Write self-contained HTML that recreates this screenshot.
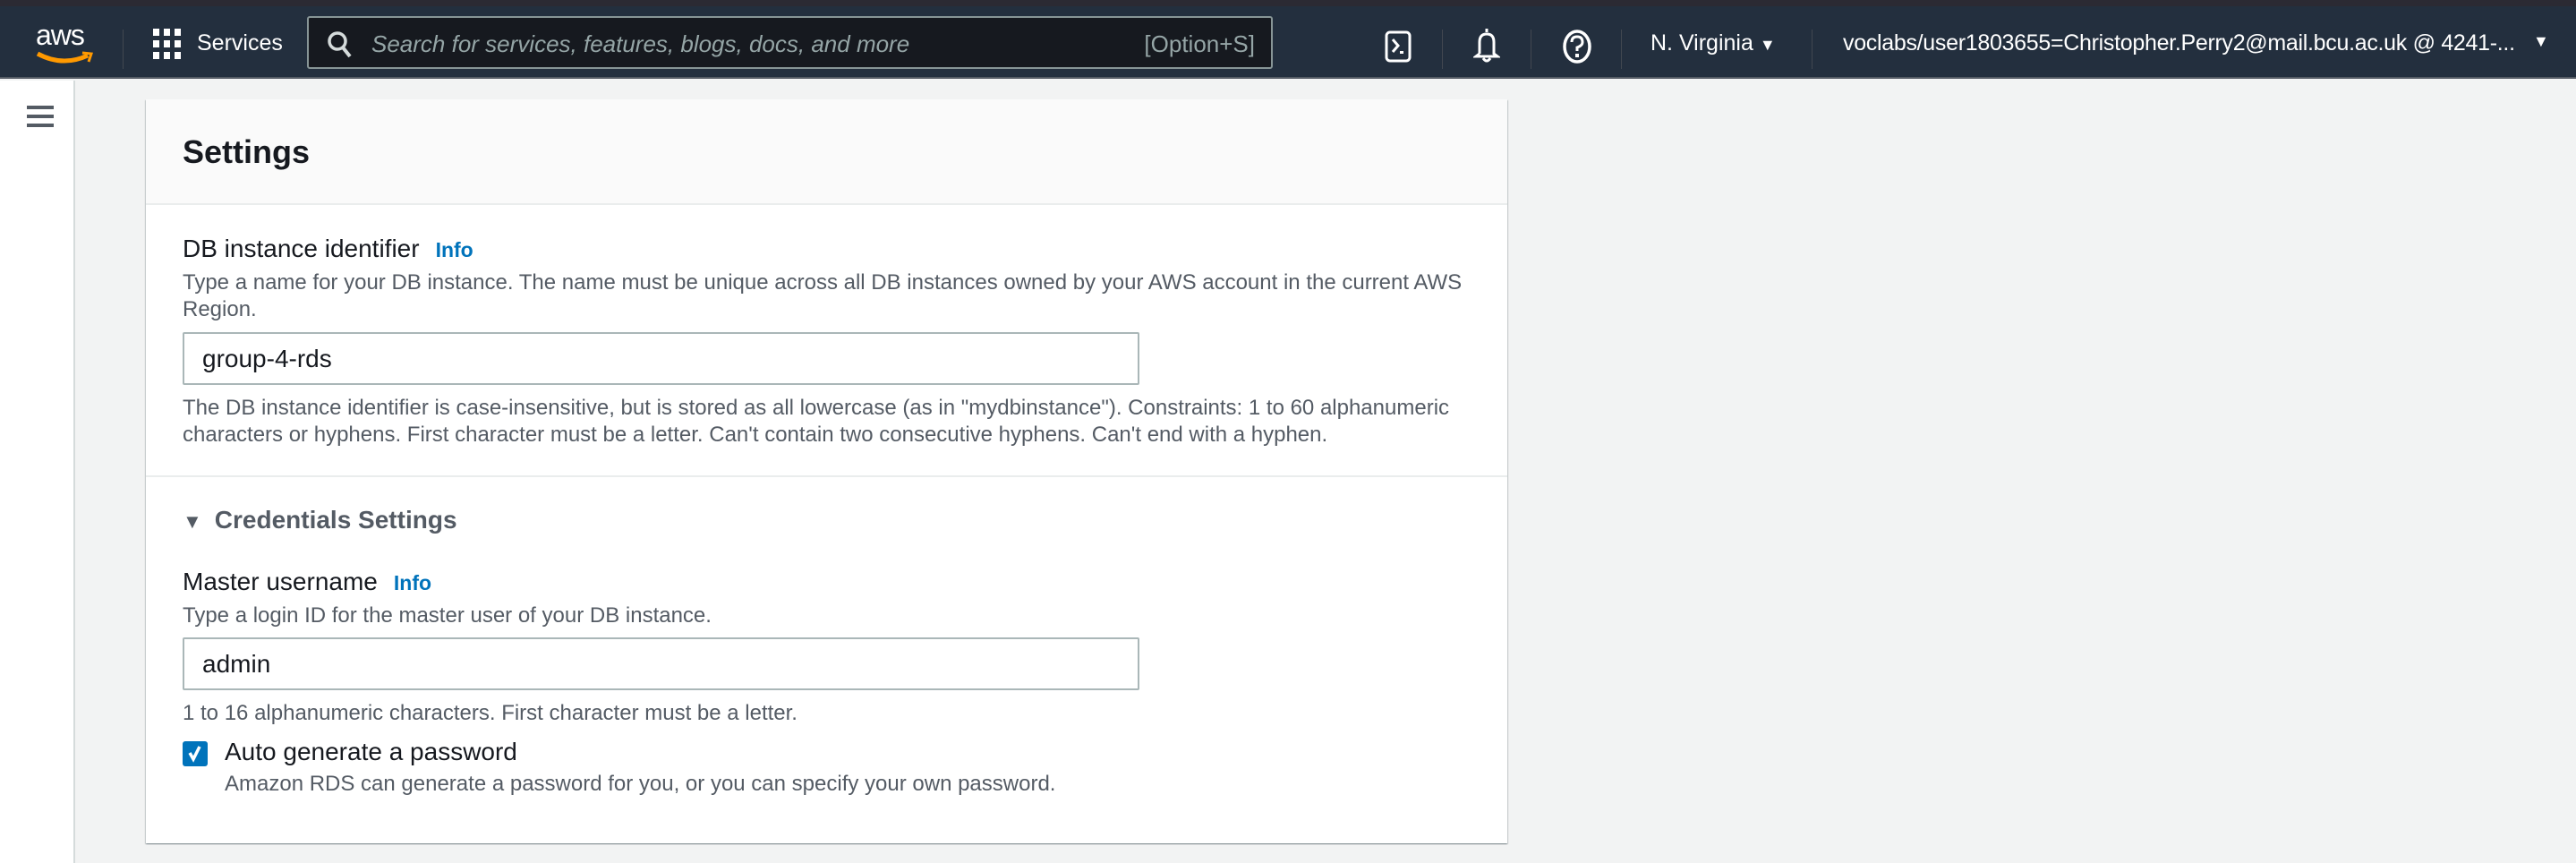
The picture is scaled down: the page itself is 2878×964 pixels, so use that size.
<!DOCTYPE html>
<html><head><meta charset="utf-8"><style>
*{box-sizing:border-box;margin:0;padding:0}
body{width:2878px;height:964px;overflow:hidden;background:#f2f3f3;font-family:"Liberation Sans",sans-serif;position:relative}
.top{position:absolute;left:0;top:0;width:2878px;height:7px;background:#2b2a33}
.hdr{position:absolute;left:0;top:7px;width:2878px;height:81px;background:#232f3e;border-bottom:2px solid #545b64}
.abs{position:absolute}
.wt{color:#fff;font-size:25px}
.div{position:absolute;top:26px;width:1px;height:44px;background:#414750}
.side{position:absolute;left:0;top:90px;width:84px;height:874px;background:#fff;border-right:2px solid #d5dbdb}
.card{position:absolute;left:163px;top:111px;width:1521px;height:831px;background:#fff;box-shadow:0 1px 1px 0 rgba(0,28,36,.3),1px 1px 1px 0 rgba(0,28,36,.15),-1px 1px 1px 0 rgba(0,28,36,.15)}
.ch{position:absolute;left:0;top:0;width:100%;height:118px;background:#fafafa;border-bottom:2px solid #eaeded}
.t{position:absolute;left:41px;white-space:nowrap}
.lbl{font-size:28px;color:#16191f}
.info{color:#0073bb;font-weight:bold;font-size:23px;margin-left:18px}
.desc{font-size:24px;color:#545b64}
.inp{position:absolute;left:41px;width:1069px;height:59px;border:2px solid #aab7b8;border-radius:2px;font-size:28px;color:#16191f;padding:12px 20px}
</style></head><body>
<div class="top"></div>
<div class="hdr">
 <div class="abs wt" style="left:40px;top:14px;font-size:32px;letter-spacing:-1px">aws</div>
 <svg class="abs" style="left:40px;top:50px" width="64" height="18"><path d="M2 3 Q30 18 58 5" stroke="#ff9900" stroke-width="5" fill="none"/><path d="M52 2 L62 3 L59 12" stroke="#ff9900" stroke-width="3" fill="none"/></svg>
 <div class="div" style="left:137px"></div>
 <svg class="abs" style="left:171px;top:25px" width="32" height="34"><g fill="#fff"><rect x="0" y="0" width="7" height="8"/><rect x="12" y="0" width="7" height="8"/><rect x="24" y="0" width="7" height="8"/><rect x="0" y="13" width="7" height="8"/><rect x="12" y="13" width="7" height="8"/><rect x="24" y="13" width="7" height="8"/><rect x="0" y="26" width="7" height="8"/><rect x="12" y="26" width="7" height="8"/><rect x="24" y="26" width="7" height="8"/></g></svg>
 <div class="abs wt" style="left:220px;top:27px">Services</div>
 <div class="abs" style="left:343px;top:11px;width:1079px;height:59px;background:#16191f;border:2px solid #879596;border-radius:3px">
  <svg class="abs" style="left:20px;top:14px" width="30" height="32"><circle cx="12" cy="12" r="9" stroke="#d5dbdb" stroke-width="3.5" fill="none"/><path d="M18 19 L26 29" stroke="#d5dbdb" stroke-width="4"/></svg>
  <div class="abs" style="left:70px;top:14px;font-size:26px;color:#95a5a6;font-style:italic">Search for services, features, blogs, docs, and more</div>
  <div class="abs" style="right:18px;top:14px;font-size:26px;color:#95a5a6">[Option+S]</div>
 </div>
 <svg class="abs" style="left:1547px;top:25px" width="30" height="40"><rect x="2" y="4" width="26" height="32" rx="4" stroke="#fff" stroke-width="3" fill="none"/><path d="M9 12 L15 19 L9 26" stroke="#fff" stroke-width="3" fill="none"/><rect x="17" y="25" width="4" height="3" fill="#fff"/></svg>
 <div class="div" style="left:1611px"></div>
 <svg class="abs" style="left:1646px;top:22px" width="30" height="44"><path d="M15 3 L15 7 M7 31 L7 18 Q7 9 15 9 Q23 9 23 18 L23 31 L27 34 L3 34 L7 31" stroke="#fff" stroke-width="3" fill="none"/><path d="M11 36 Q15 42 19 36" stroke="#fff" stroke-width="3" fill="none"/></svg>
 <div class="div" style="left:1710px"></div>
 <svg class="abs" style="left:1744px;top:25px" width="36" height="40"><ellipse cx="18" cy="20" rx="14" ry="17" stroke="#fff" stroke-width="3.5" fill="none"/><path d="M12 15 Q12 9 18 9 Q24 9 24 15 Q24 19 18 21 L18 25" stroke="#fff" stroke-width="3" fill="none"/><rect x="16" y="28" width="4" height="4" fill="#fff"/></svg>
 <div class="div" style="left:1811px"></div>
 <div class="abs wt" style="left:1844px;top:27px">N. Virginia <span style="font-size:18px">&#9660;</span></div>
 <div class="div" style="left:2024px"></div>
 <div class="abs wt" style="left:2059px;top:27px;font-size:25px;letter-spacing:-0.3px">voclabs/user1803655=Christopher.Perry2@mail.bcu.ac.uk @ 4241-...</div>
 <div class="abs wt" style="left:2830px;top:29px;font-size:18px">&#9660;</div>
</div>
<div class="side">
 <svg class="abs" style="left:30px;top:28px" width="30" height="24"><rect x="0" y="0" width="30" height="4" fill="#545b64"/><rect x="0" y="10" width="30" height="4" fill="#545b64"/><rect x="0" y="20" width="30" height="4" fill="#545b64"/></svg>
</div>
<div class="card">
 <div class="ch"><div class="t" style="top:38px;font-size:36px;font-weight:bold;color:#16191f">Settings</div></div>
 <div class="t lbl" style="top:151px">DB instance identifier<span class="info">Info</span></div>
 <div class="t desc" style="top:191px">Type a name for your DB instance. The name must be unique across all DB instances owned by your AWS account in the current AWS</div>
 <div class="t desc" style="top:221px">Region.</div>
 <div class="inp" style="top:260px">group-4-rds</div>
 <div class="t desc" style="top:331px">The DB instance identifier is case-insensitive, but is stored as all lowercase (as in "mydbinstance"). Constraints: 1 to 60 alphanumeric</div>
 <div class="t desc" style="top:361px">characters or hyphens. First character must be a letter. Can't contain two consecutive hyphens. Can't end with a hyphen.</div>
 <div class="abs" style="left:0;top:420px;width:100%;height:2px;background:#eaeded"></div>
 <div class="t" style="top:454px;font-size:28px;font-weight:bold;color:#545b64"><span style="font-size:22px;margin-right:14px">&#9660;</span>Credentials Settings</div>
 <div class="t lbl" style="top:523px">Master username<span class="info">Info</span></div>
 <div class="t desc" style="top:563px">Type a login ID for the master user of your DB instance.</div>
 <div class="inp" style="top:601px">admin</div>
 <div class="t desc" style="top:672px">1 to 16 alphanumeric characters. First character must be a letter.</div>
 <div class="abs" style="left:41px;top:717px;width:28px;height:28px;background:#0073bb;border-radius:3px"><svg width="28" height="28"><path d="M8 13 L12 20 L19 6" stroke="#fff" stroke-width="3.5" fill="none"/></svg></div>
 <div class="t lbl" style="left:88px;top:713px">Auto generate a password</div>
 <div class="t desc" style="left:88px;top:751px">Amazon RDS can generate a password for you, or you can specify your own password.</div>
</div>
</body></html>
